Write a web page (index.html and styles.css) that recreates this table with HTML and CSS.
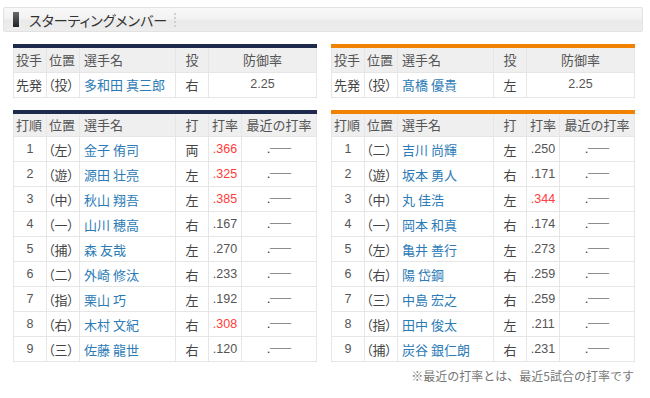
FILE: index.html
```html
<!DOCTYPE html>
<html lang="ja">
<head>
<meta charset="utf-8">
<link rel="stylesheet" href="styles.css">
</head>
<body>
<div class="page">
  <div class="titlebar">
    <span class="mark"></span>
    <span class="title">スターティングメンバー</span>
    <span class="sep"></span>
  </div>

  <div class="teams">
    <div class="team lions">
      <table class="tbl pitch">
        <colgroup><col class="c1"><col class="c2"><col class="c3"><col class="c4"><col class="c5w"></colgroup>
        <tr class="head"><th class="l">投手</th><th class="l">位置</th><th class="l nm">選手名</th><th>投</th><th>防御率</th></tr>
        <tr><td class="l">先発</td><td class="l pos">（投）</td><td class="name">多和田 真三郎</td><td>右</td><td class="num">2.25</td></tr>
      </table>
      <table class="tbl bat">
        <colgroup><col class="c1"><col class="c2"><col class="c3"><col class="c4"><col class="c5"><col class="c6"></colgroup>
        <tr class="head"><th class="l">打順</th><th class="l">位置</th><th class="l nm">選手名</th><th>打</th><th>打率</th><th>最近の打率</th></tr>
        <tr><td class="num">1</td><td class="l pos">（左）</td><td class="name">金子 侑司</td><td>両</td><td class="num red">.366</td><td class="rec">.――</td></tr>
        <tr><td class="num">2</td><td class="l pos">（遊）</td><td class="name">源田 壮亮</td><td>左</td><td class="num red">.325</td><td class="rec">.――</td></tr>
        <tr><td class="num">3</td><td class="l pos">（中）</td><td class="name">秋山 翔吾</td><td>左</td><td class="num red">.385</td><td class="rec">.――</td></tr>
        <tr><td class="num">4</td><td class="l pos">（一）</td><td class="name">山川 穂高</td><td>右</td><td class="num">.167</td><td class="rec">.――</td></tr>
        <tr><td class="num">5</td><td class="l pos">（捕）</td><td class="name">森 友哉</td><td>左</td><td class="num">.270</td><td class="rec">.――</td></tr>
        <tr><td class="num">6</td><td class="l pos">（二）</td><td class="name">外崎 修汰</td><td>右</td><td class="num">.233</td><td class="rec">.――</td></tr>
        <tr><td class="num">7</td><td class="l pos">（指）</td><td class="name">栗山 巧</td><td>左</td><td class="num">.192</td><td class="rec">.――</td></tr>
        <tr><td class="num">8</td><td class="l pos">（右）</td><td class="name">木村 文紀</td><td>右</td><td class="num red">.308</td><td class="rec">.――</td></tr>
        <tr><td class="num">9</td><td class="l pos">（三）</td><td class="name">佐藤 龍世</td><td>右</td><td class="num">.120</td><td class="rec">.――</td></tr>
      </table>
    </div>

    <div class="team giants">
      <table class="tbl pitch">
        <colgroup><col class="c1"><col class="c2"><col class="c3"><col class="c4"><col class="c5w"></colgroup>
        <tr class="head"><th class="l">投手</th><th class="l">位置</th><th class="l nm">選手名</th><th>投</th><th>防御率</th></tr>
        <tr><td class="l">先発</td><td class="l pos">（投）</td><td class="name">髙橋 優貴</td><td>左</td><td class="num">2.25</td></tr>
      </table>
      <table class="tbl bat">
        <colgroup><col class="c1"><col class="c2"><col class="c3"><col class="c4"><col class="c5"><col class="c6"></colgroup>
        <tr class="head"><th class="l">打順</th><th class="l">位置</th><th class="l nm">選手名</th><th>打</th><th>打率</th><th>最近の打率</th></tr>
        <tr><td class="num">1</td><td class="l pos">（二）</td><td class="name">吉川 尚輝</td><td>左</td><td class="num">.250</td><td class="rec">.――</td></tr>
        <tr><td class="num">2</td><td class="l pos">（遊）</td><td class="name">坂本 勇人</td><td>右</td><td class="num">.171</td><td class="rec">.――</td></tr>
        <tr><td class="num">3</td><td class="l pos">（中）</td><td class="name">丸 佳浩</td><td>左</td><td class="num red">.344</td><td class="rec">.――</td></tr>
        <tr><td class="num">4</td><td class="l pos">（一）</td><td class="name">岡本 和真</td><td>右</td><td class="num">.174</td><td class="rec">.――</td></tr>
        <tr><td class="num">5</td><td class="l pos">（左）</td><td class="name">亀井 善行</td><td>左</td><td class="num">.273</td><td class="rec">.――</td></tr>
        <tr><td class="num">6</td><td class="l pos">（右）</td><td class="name">陽 岱鋼</td><td>右</td><td class="num">.259</td><td class="rec">.――</td></tr>
        <tr><td class="num">7</td><td class="l pos">（三）</td><td class="name">中島 宏之</td><td>右</td><td class="num">.259</td><td class="rec">.――</td></tr>
        <tr><td class="num">8</td><td class="l pos">（指）</td><td class="name">田中 俊太</td><td>左</td><td class="num">.211</td><td class="rec">.――</td></tr>
        <tr><td class="num">9</td><td class="l pos">（捕）</td><td class="name">炭谷 銀仁朗</td><td>右</td><td class="num">.231</td><td class="rec">.――</td></tr>
      </table>
      <p class="note">※最近の打率とは、最近5試合の打率です</p>
    </div>
  </div>
</div>
</body>
</html>
```

FILE: styles.css
```css
* { box-sizing: border-box; }
html, body {
  margin: 0;
  padding: 0;
  background: #fff;
}
body {
  font-family: "Noto Sans CJK JP", "Noto Sans", sans-serif;
  color: #444;
}
.page {
  width: 650px;
  padding: 7px 7px 0 3px;
}
.titlebar {
  height: 25px;
  border: 1px solid #e2e2e2;
  border-radius: 2px;
  background: linear-gradient(#f8f8f8 0%, #f2f2f2 48%, #eaeaea 52%, #ededed 100%);
  display: flex;
  align-items: center;
  padding-left: 9px;
}
.mark {
  width: 6px;
  height: 15px;
  background: linear-gradient(#6a6a6a, #222);
}
.title {
  margin-left: 10px;
  font-size: 14px;
  color: #333;
  font-feature-settings: "palt";
  line-height: 1;
}
.sep {
  margin-left: 7px;
  height: 14px;
  border-left: 2px dotted #d0d0d0;
}
.teams {
  display: grid;
  grid-template-columns: 303px 303px;
  column-gap: 15px;
  margin: 12px 0 0 10px;
}
.tbl {
  width: 303px;
  border-collapse: collapse;
  table-layout: fixed;
  font-size: 13px;
}
.lions .tbl { border-top: 4px solid #1d2a4d; }
.giants .tbl { border-top: 4px solid #f08200; }
.tbl.bat { margin-top: 12px; }
.c1 { width: 33px; }
.c2 { width: 33px; }
.c3 { width: 96px; }
.c4 { width: 33px; }
.c5 { width: 33px; }
.c5w { width: 108px; }
.c6 { width: 75px; }
.tbl th, .tbl td {
  height: 25px;
  padding: 0 2px;
  border: 1px solid #e6e6e6;
  text-align: center;
  font-weight: normal;
  white-space: nowrap;
  overflow: hidden;
  line-height: 1;
}
.tbl.pitch th { height: 26px; }
.tbl th {
  background: #efefef;
  color: #555;
}
.tbl td { background: #fff; color: #444; }
.tbl .l { text-align: left; }
.tbl .nm { padding-left: 4px; }
.tbl .pos { font-feature-settings: "palt"; padding-left: 1px; }
.tbl .name {
  text-align: left;
  padding-left: 4px;
  color: #2c7bb6;
}
.tbl .num {
  font-family: "Liberation Sans", "Noto Sans", sans-serif;
  font-size: 12.5px;
  color: #555;
}
.tbl .red { color: #ff3b3b; }
.tbl .rec {
  font-size: 11.5px;
  color: #333;
  letter-spacing: -1px;
}
.note {
  margin: 6px 0 0;
  text-align: right;
  font-size: 12px;
  color: #777;
  line-height: 15px;
}
```
